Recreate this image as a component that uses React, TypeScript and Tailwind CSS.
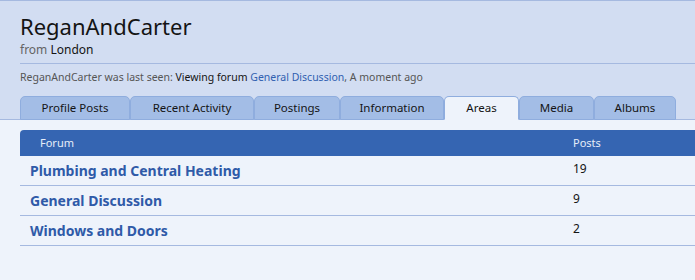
const tabs = ['Profile Posts', 'Recent Activity', 'Postings', 'Information', 'Areas', 'Media', 'Albums'];
const tabWidths = ['w-[110px]', 'w-[124px]', 'w-[86px]', 'w-[104px]', 'w-[75px]', 'w-[75px]', 'w-[82px]'];

const rows = [
  { title: 'Plumbing and Central Heating', posts: 19 },
  { title: 'General Discussion', posts: 9 },
  { title: 'Windows and Doors', posts: 2 },
];

export default function App() {
  return (
    <div className="h-[280px] w-[695px] overflow-hidden bg-[#eef3fb] font-['Noto_Sans',sans-serif]">
      <header className="border-t border-b border-[#a5b9e0] bg-[#d2ddf2] pl-5">
        <h1 className="pt-[10px] text-[22px] leading-[30px] text-[#141414]">ReganAndCarter</h1>
        <p className="text-[12px] leading-[17px] text-[#646464]">
          from <span className="text-[#141414]">London</span>
        </p>
        <div className="mt-[5px] border-t border-[#a5b9e0] pt-[5px] text-[10.5px] leading-[16px] text-[#555]">
          ReganAndCarter was last seen: <span className="text-[#141414]">Viewing forum</span>{' '}
          <span className="text-[#3060b0]">General Discussion</span>, A moment ago
        </div>
        <ul className="mt-[11px] -mb-px flex">
          {tabs.map((t, i) => (
            <li
              key={t}
              className={`${tabWidths[i]} flex h-[24px] items-center justify-center rounded-t-[5px] border border-[#8fadde] text-[11.5px] text-[#141414] ${
                t === 'Areas' ? 'border-b-[#eef3fb] bg-[#eef3fb]' : 'bg-[#a3bde6]'
              }`}
            >
              {t}
            </li>
          ))}
        </ul>
      </header>
      <div className="pl-5 pt-[10px]">
        <div className="flex h-[26px] items-center rounded-tl-[4px] bg-[#3565b2] text-[11px] text-[#e6edf9]">
          <span className="w-[553px] pl-5">Forum</span>
          <span>Posts</span>
        </div>
        {rows.map((r) => (
          <div key={r.title} className="flex h-[30px] border-b border-[#a5b9e0]">
            <span className="w-[553px] pl-[10px] pt-[4px] text-[14px] font-bold text-[#2f5aa8]">{r.title}</span>
            <span className="pt-[4px] text-[12px] text-[#141414]">{r.posts}</span>
          </div>
        ))}
      </div>
    </div>
  );
}
